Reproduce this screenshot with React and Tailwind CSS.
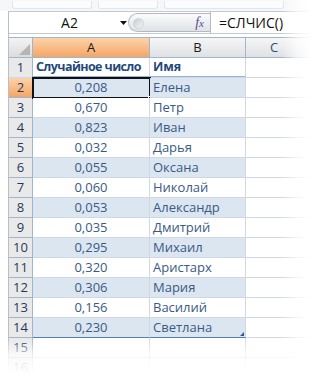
import React from "react";

const rows = [
  ["0,208", "Елена"],
  ["0,670", "Петр"],
  ["0,823", "Иван"],
  ["0,032", "Дарья"],
  ["0,055", "Оксана"],
  ["0,060", "Николай"],
  ["0,053", "Александр"],
  ["0,035", "Дмитрий"],
  ["0,295", "Михаил"],
  ["0,320", "Аристарх"],
  ["0,306", "Мария"],
  ["0,156", "Василий"],
  ["0,230", "Светлана"],
];

const font = { fontFamily: '"Open Sans", "Noto Sans", sans-serif' };

export default function App() {
  return (
    <div className="relative w-[312px] h-[374px] overflow-hidden bg-white text-[13px]" style={font}>
      {/* faded ribbon strip */}
      <div className="h-[11px] flex gap-[6px] pl-[12px] pt-[1px] bg-[#f6f7f9]">
        <div className="w-[80px] h-[8px] rounded-b-[3px] border border-t-0 border-[#e3e6ea] bg-[#fbfcfd]" />
        <div className="w-[60px] h-[8px] rounded-b-[3px] border border-t-0 border-[#e3e6ea] bg-[#fbfcfd]" />
        <div className="w-[120px] h-[8px] rounded-b-[3px] border border-t-0 border-[#e3e6ea] bg-[#fbfcfd]" />
      </div>
      <div className="ml-[8px] border-l border-[#b9bfc7]">
        {/* formula bar */}
        <div className="flex h-[23px] border-y border-[#c5cad1] items-stretch bg-white">
          <div className="w-[111px] flex items-center justify-center text-[14px] text-[#111] pl-[10px]">A2</div>
          <div className="w-[9px] flex items-center">
            <svg width="7" height="4" viewBox="0 0 7 4"><path d="M0 0h7L3.5 4z" fill="#111" /></svg>
          </div>
          <div className="w-[82px] my-[1px] ml-[-1px] relative rounded-l-full border border-r-0 border-[#b4bac2] bg-gradient-to-b from-[#fbfbfc] to-[#dfe2e6] flex items-center justify-end pr-[6px]">
            <div className="absolute left-[4px] top-[4px] w-[11px] h-[11px] rounded-full bg-gradient-to-br from-[#c8cdd3] to-[#f4f5f6] border border-[#cfd3d8]" />
            <span className="italic text-[14px] text-[#5a4a8c]" style={{ fontFamily: '"Liberation Serif", serif' }}>
              f<span className="text-[11px]">x</span>
            </span>
          </div>
          <div className="w-[1px] bg-[#b4bac2]" />
          <div className="flex-1 flex items-center pl-[8px] text-[14px] text-[#111]">=СЛЧИС()</div>
        </div>
        <div className="h-[3px] bg-white" />
        {/* column headers */}
        <div className="flex h-[21px] border-y border-[#9eb6ce]">
          <div className="w-[24px] relative bg-gradient-to-b from-[#f3f3f3] to-[#dcdcdc] border-r border-[#9eb6ce]">
            <svg className="absolute right-[2px] bottom-[2px]" width="11" height="11" viewBox="0 0 11 11"><path d="M11 0V11H0z" fill="#b5b5b5" /></svg>
          </div>
          <div className="w-[117px] flex items-center justify-center bg-gradient-to-b from-[#fcd3a8] to-[#f5a565] border-r border-[#9eb6ce] text-[#1b1b1b] text-[13px]">A</div>
          <div className="w-[96px] flex items-center justify-center bg-gradient-to-b from-[#f6f6f6] to-[#dfe1e4] border-r border-[#9eb6ce] text-[#1b1b1b] text-[13px]">B</div>
          <div className="flex-1 flex items-center justify-center bg-gradient-to-b from-[#f6f6f6] to-[#dfe1e4] text-[#2a4f7a] text-[13px] pr-[10px]">C</div>
        </div>
        {/* row 1 */}
        <div className="flex h-[20px] border-b border-[#d0d7e5]">
          <div className="w-[24px] flex items-center justify-center bg-[#e9e9e9] border-r border-[#9eb6ce] text-[#1f3a60]">1</div>
          <div className="w-[117px] flex items-center pl-[3px] border-r border-[#d0d7e5] border-b border-b-[#95b3d7] font-bold text-[#1f497d] text-[12.5px] tracking-[-0.6px] whitespace-nowrap overflow-hidden">Случайное число</div>
          <div className="w-[96px] flex items-center pl-[3px] border-r border-[#d0d7e5] border-b border-b-[#95b3d7] font-bold text-[#1f497d] text-[12.5px]">Имя</div>
          <div className="flex-1" />
        </div>
        {rows.map(([v, n], i) => {
          const r = i + 2;
          const band = r % 2 === 0;
          const last = r === 14;
          const sel = r === 2;
          return (
            <div key={r} className="flex h-[20px]">
              <div className={`w-[24px] flex items-center justify-center border-r border-b ${sel ? "bg-gradient-to-b from-[#fcd3a8] to-[#f5a565] border-[#9eb6ce]" : "bg-[#e9e9e9] border-[#9eb6ce]"} text-[#1f3a60]`}>{r}</div>
              <div className={`relative w-[117px] flex items-center justify-center border-r border-b ${last ? "border-b-[#4f81bd]" : "border-b-[#d0d7e5]"} border-r-[#d0d7e5] ${band ? "bg-[#dce6f1]" : "bg-white"} text-[#3a5a85]`}>
                {v}
                {sel && (
                  <>
                    <div className="absolute left-[-1px] top-[-1px] right-[-2px] bottom-[-2px] border-2 border-[#111]" />
                    <div className="absolute right-[-4px] bottom-[-4px] w-[5px] h-[5px] bg-[#111] border border-white" />
                  </>
                )}
              </div>
              <div className={`relative w-[96px] flex items-center pl-[3px] border-r border-b ${last ? "border-b-[#4f81bd]" : "border-b-[#d0d7e5]"} border-r-[#d0d7e5] ${band ? "bg-[#dce6f1]" : "bg-white"} text-[#3a5a85]`}>
                {n}
                {last && (
                  <svg className="absolute right-[1px] bottom-[1px]" width="4" height="4" viewBox="0 0 4 4"><path d="M4 0V4H0z" fill="#2f5597" /></svg>
                )}
              </div>
              <div className="flex-1 border-b border-[#d0d7e5]" />
            </div>
          );
        })}
        {[15, 16].map((r) => (
          <div key={r} className="flex h-[20px]">
            <div className="w-[24px] flex items-center justify-center bg-[#e9e9e9] border-r border-b border-[#9eb6ce] text-[#1f3a60]">{r}</div>
            <div className="w-[117px] border-r border-b border-[#d0d7e5]" />
            <div className="w-[96px] border-r border-b border-[#d0d7e5]" />
            <div className="flex-1 border-b border-[#d0d7e5]" />
          </div>
        ))}
      </div>
      {/* fades */}
      <div className="absolute left-0 right-0 bottom-0 h-[36px] bg-gradient-to-b from-white/0 via-white/80 to-white" />
      <div className="absolute top-0 bottom-0 right-0 w-[30px] bg-gradient-to-r from-white/0 via-white/70 to-white" />
    </div>
  );
}
